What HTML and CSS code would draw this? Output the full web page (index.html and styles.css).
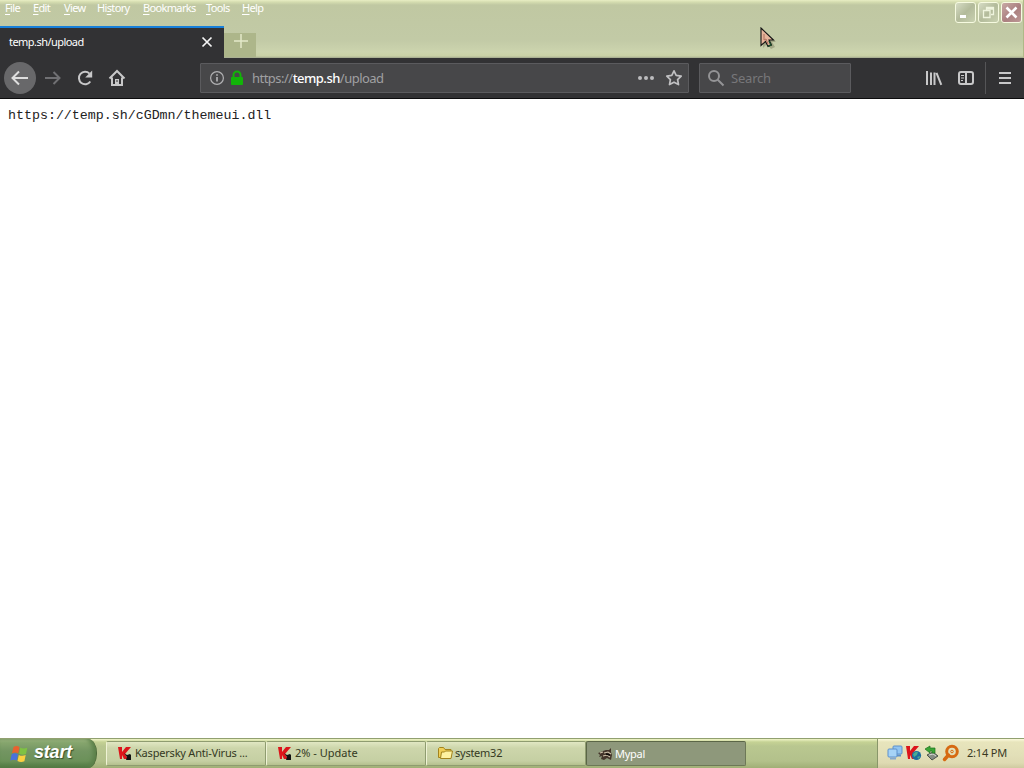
FILE: index.html
```html
<!DOCTYPE html>
<html lang="en">
<head>
  <meta charset="UTF-8">
  <title>temp.sh/upload</title>
  <link rel="stylesheet" href="styles.css">
</head>
<body>
  <div class="browser">
    <div class="titlebar">
      <div class="title-row">
        <div class="menu">
          <span><u>F</u>ile</span>
          <span><u>E</u>dit</span>
          <span><u>V</u>iew</span>
          <span>Hi<u>s</u>tory</span>
          <span><u>B</u>ookmarks</span>
          <span><u>T</u>ools</span>
          <span><u>H</u>elp</span>
        </div>
        <div class="window-buttons">
          <div class="win-btn"><svg width="19" height="19"><path d="M4 13.500h6" stroke="#fff" stroke-width="3"/></svg></div>
          <div class="win-btn"><svg width="19" height="19" fill="none" stroke="#eff4de" stroke-width="1.300"><path d="M7.500 7V4.500h7v7H12M7.500 6h7"/><path d="M4.500 7.500H11v7H4.500z"/></svg></div>
          <div class="win-btn close"><svg width="19" height="19"><path d="M4.500 4.500l10 10M14.500 4.500l-10 10" stroke="#fff" stroke-width="2.600"/></svg></div>
        </div>
      </div>
      <div class="tabs">
        <div class="tab">
          <span class="tab-title">temp.sh/upload</span>
          <svg width="12" height="12"><path d="M1.500 1.500l9 9M10.500 1.500l-9 9" stroke="#f5f5f5" stroke-width="1.700"/></svg>
        </div>
        <div class="new-tab"><svg width="16" height="16"><path d="M8 1v14M1 8h14" stroke="#e3e9c9" stroke-width="1.500"/></svg></div>
      </div>
    </div>

    <div class="nav">
      <div class="nav-buttons">
        <div class="back"><svg width="20" height="20" fill="none" stroke="#dedede" stroke-width="2"><path d="M18 10H3M9 3.500L2.500 10 9 16.500"/></svg></div>
        <svg width="18" height="18" fill="none" stroke="#707073" stroke-width="2"><path d="M1 9h14M9.500 3l6 6-6 6"/></svg>
        <svg width="18" height="18" fill="none" stroke="#c8c8c9" stroke-width="2"><path d="M14.300 12.500A6.200 6.200 0 1 1 13.500 4.600"/><path d="M16.200 1.500v7H9.200z" fill="#c8c8c9" stroke="none"/></svg>
        <svg width="18" height="18" fill="none" stroke="#c8c8c9" stroke-width="2"><path d="M1.500 9.500L9 2l7.500 7.500M4 8.500V16h10V8.500"/><path d="M7 15v-5h4v5z" fill="#c8c8c9" stroke="none"/><path d="M9 11v2" stroke="#323234" stroke-width="1"/></svg>
      </div>
      <div class="urlbar">
        <svg width="16" height="16" fill="none" stroke="#b1b1b3"><circle cx="8" cy="8" r="6.400" stroke-width="1.200"/><path d="M8 7v4.500M8 4.200v1.600" stroke-width="1.700"/></svg>
        <svg class="lock" width="14" height="16"><path d="M3.500 8V5a3.500 3.500 0 0 1 7 0v3" fill="none" stroke="#12b408" stroke-width="2"/><rect x="1" y="7" width="12" height="8" rx="1" fill="#12b408"/></svg>
        <span class="url">https://<b>temp.sh</b>/upload</span>
        <svg class="dots" width="18" height="16" fill="#bcbcbe"><circle cx="3" cy="8" r="2"/><circle cx="9" cy="8" r="2"/><circle cx="15" cy="8" r="2"/></svg>
        <svg width="18" height="18" fill="none" stroke="#c0c0c2" stroke-width="1.700" stroke-linejoin="round"><path d="M9 1.800l2.200 4.600 5 .7-3.600 3.500.9 5L9 13.200l-4.500 2.400.9-5L1.800 7.100l5-.7z"/></svg>
      </div>
      <div class="search">
        <svg width="18" height="18" fill="none" stroke="#949496" stroke-width="2"><circle cx="7" cy="7" r="5"/><path d="M10.500 10.500l6 6"/></svg>
        <span>Search</span>
      </div>
      <div class="tools">
        <svg width="18" height="16" stroke="#c8c8c9" stroke-width="2" fill="none"><path d="M2 1v14M6 2.500V15M9.500 2.500V15M11.500 2.800l4.800 12"/></svg>
        <svg width="18" height="16" stroke="#c8c8c9" stroke-width="2" fill="none"><rect x="2" y="2" width="14" height="12" rx="2"/><path d="M9 2v12"/><path d="M4 5.500h3M4 8h3M4 10.500h2" stroke-width="1"/></svg>
        <div class="hamburger"><svg width="14" height="14" stroke="#c8c8c9" stroke-width="2"><path d="M1 2h12M1 7h12M1 12h12"/></svg></div>
      </div>
    </div>

    <pre class="page">https://temp.sh/cGDmn/themeui.dll</pre>
  </div>

  <div class="taskbar">
    <div class="start">
      <svg width="20" height="20" viewBox="0 0 20 20">
        <path d="M4.500 3q3-2 6 0L9.300 9.300q-3-1.700-6.300 0z" fill="#e8622f"/>
        <path d="M11.300 3.600q3 1.800 7 .2L17 10q-3.400 1.500-6.900-.2z" fill="#7fc243"/>
        <path d="M2.700 10.300q3-1.900 6.300 0L7.800 16.600q-3-1.800-6.500 0z" fill="#4a72dc"/>
        <path d="M9.800 10.900q3 1.800 6.900.2l-1.300 6.200q-3.500 1.500-6.900-.2z" fill="#fbd040"/>
      </svg>
      <span>start</span>
    </div>
    <div class="tasks">
      <div class="task">
        <svg width="16" height="16"><path d="M1 2h4v5l4-5h5L8 9l3 5H7L5 10v4H3z" fill="#dc151b"/><path d="M7 8l3 2 3-1 1 1v5H9l1-3z" fill="#111"/></svg>
        <span class="kav">Kaspersky Anti-Virus ...</span>
      </div>
      <div class="task">
        <svg width="16" height="16"><path d="M1 2h4v5l4-5h5L8 9l3 5H7L5 10v4H3z" fill="#dc151b"/><path d="M7 8l3 2 3-1 1 1v5H9l1-3z" fill="#111"/></svg>
        <span class="update">2% - Update</span>
      </div>
      <div class="task">
        <svg width="17" height="16" stroke="#a3841d" stroke-linejoin="round"><path d="M1.500 12.500v-9l1-1h4l1.500 2h6v8z" fill="#f0cf58"/><path d="M3.500 13.500l1-6.500h3l1-1h7l-1.500 7.500z" fill="#fff3a0"/></svg>
        <span class="folder">system32</span>
      </div>
      <div class="task active">
        <svg width="17" height="16"><path d="M1 7l3-1 2-1 3-1 3 0 2-2 0 4 1 3-1 5-4-2-3 2-3-1 1-3-3 1 1-2z" fill="#44352a"/><path d="M3 7l3-1M7 7l4-1 3 2M6 10l4-1 3 2" stroke="#cfc2aa" stroke-width="1.100" fill="none"/><path d="M9 8l4 1" stroke="#0d0906" stroke-width="1.500"/></svg>
        <span class="mypal">Mypal</span>
      </div>
    </div>
    <div class="tray">
      <svg width="16" height="16" stroke="#5c90cb"><rect x="6" y="1" width="9" height="8" rx="1" fill="#91c5f1"/><path d="M10 10.500h4" stroke-width="2"/><rect x="1" y="4" width="9" height="8" rx="1" fill="#a6d3f6"/><path d="M3 13.500h6" stroke-width="2" stroke="#86a9cc"/></svg>
      <svg width="17" height="16"><path d="M1 1h4v5l4-5h5L8 8l3 6H7L5 10v4H3z" fill="#dc151b"/><circle cx="11.500" cy="10.500" r="4.600" fill="#1c6d9e"/><path d="M8 9q3-3 5-2l-1 3-3 2zM12 12l3-1-1 3z" fill="#49ad91"/></svg>
      <svg width="16" height="16"><path d="M3 10l6-3 5 4-6 4z" fill="#868c84" stroke="#4c544b"/><path d="M5 10l4-1 3 2" stroke="#d8dcd4" fill="none"/><path d="M1 4l5-3v2h5v5H8V6H6v2z" fill="#3ba635" stroke="#1c701d" stroke-width=".7"/></svg>
      <svg width="17" height="18" fill="none" stroke="#d66a12"><circle cx="10" cy="7.500" r="5.300" stroke-width="3"/><path d="M6.500 11l-4 4.500" stroke-width="3.500" stroke-linecap="round"/><circle cx="10" cy="7.500" r="1.300" stroke-width="1"/></svg>
      <span class="clock">2:14 PM</span>
    </div>
  </div>

  <svg class="cursor" width="20" height="25" viewBox="0 0 20 25">
    <path d="M3 3v18l4-4 4 5 4-2-3-5h4z" fill="#777b58" opacity=".45"/>
    <path d="M1 1v17.500l4.500-4 2.500 5 3.500-1.500-2.500-5h4.500z" fill="#e6b59b" stroke="#151515" stroke-width="1.100"/>
    <path d="M4 7v6l2-1 2 5" fill="none" stroke="#b0705f"/>
    <path d="M9 14l2 4-3 1" fill="none" stroke="#1f4c2d" stroke-width="1.500"/>
  </svg>
</body>
</html>
```

FILE: styles.css
```css
* {
  box-sizing: border-box;
}

body {
  margin: 0;
  width: 1024px;
  height: 768px;
  overflow: hidden;
  display: flex;
  flex-direction: column;
  background: #fff;
  font-family: "Noto Sans", sans-serif;
  font-size: 11px;
}

svg {
  display: block;
  flex: none;
}

span {
  white-space: nowrap;
}

.browser {
  flex: 1;
}

/* title bar */
.titlebar {
  height: 58px;
  background: linear-gradient(#e8eec4 0, #d5ddb0 2px, #c0c8a2 5px, #c2caa6 40px, #ccd4ae 52px, #c9d1a6 56px, #9fa58d 58px);
  border-right: 1px solid #aeb887;
}

.title-row {
  height: 26px;
  display: flex;
  justify-content: space-between;
}

.menu {
  display: grid;
  grid-template-columns: 28px 31px 33px 46px 63px 36px 30px;
  padding-left: 5px;
  line-height: 15px;
  color: #fff;
  letter-spacing: -0.65px;
}

.menu u {
  text-underline-offset: 2px;
}

.window-buttons {
  display: flex;
  gap: 2px;
  padding: 2px 1px 0 0;
}

.win-btn {
  width: 21px;
  height: 21px;
  border: 1px solid #f6fae0;
  border-radius: 3px;
  background: linear-gradient(135deg, #d6dcc4, #b3bb9b 50%, #c9d1b0);
}

.win-btn.close {
  background: linear-gradient(135deg, #c8aaa5, #ab8080 55%, #bd9896);
}

.tabs {
  display: flex;
  align-items: flex-end;
  height: 32px;
}

.tab {
  width: 224px;
  height: 32px;
  padding: 0 11px 2px 9px;
  border-top: 2px solid #1780d9;
  background: #323234;
  color: #fff;
  display: flex;
  align-items: center;
  justify-content: space-between;
}

.tab-title {
  margin-top: -2px;
  letter-spacing: -0.55px;
}

.new-tab {
  width: 32px;
  height: 24px;
  padding-left: 9px;
  margin-bottom: 1px;
  background: #adb68a;
}

/* navigation toolbar */
.nav {
  height: 41px;
  padding: 0 0 1px 4px;
  background: #323234;
  border-bottom: 1px solid #0c0c0d;
  display: flex;
  align-items: center;
}

.nav-buttons {
  width: 196px;
  display: flex;
  align-items: center;
  gap: 14px;
}

.nav-buttons .back {
  width: 32px;
  height: 32px;
  margin-right: -6px;
  border-radius: 50%;
  background: #68686a;
  display: flex;
  align-items: center;
  justify-content: center;
}

.urlbar,
.search {
  height: 30px;
  background: #474749;
  border: 1px solid #5b5b5e;
  border-radius: 1px;
  display: flex;
  align-items: center;
  color: #a0a0a2;
  font-size: 13px;
}

.urlbar {
  width: 489px;
  padding: 0 5px 0 8px;
}

.lock {
  margin-left: 5px;
}

.url {
  margin-left: 8px;
  letter-spacing: -0.52px;
}

.url b {
  color: #fff;
  font-weight: 500;
}

.dots {
  margin-left: auto;
  margin-right: 10px;
}

.search {
  width: 152px;
  margin-left: 10px;
  padding-left: 7px;
  gap: 6px;
  color: #77777a;
  letter-spacing: -0.2px;
}

.tools {
  flex: 1;
  display: flex;
  align-items: center;
  gap: 14px;
  padding-left: 74px;
}

.hamburger {
  height: 32px;
  margin-left: -4px;
  padding-left: 12px;
  border-left: 1px solid #555557;
  display: flex;
  align-items: center;
}

.page {
  margin: 0;
  padding: 9px 8px;
  font-family: "Liberation Mono", monospace;
  font-size: 13.3px;
  line-height: 15px;
  color: #222;
}

/* taskbar */
.taskbar {
  height: 30px;
  display: flex;
  border-top: 1px solid #91a070;
  background: linear-gradient(#f0f5c8 0, #c5d294 3px, #b9c790 7px, #b3c18b 22px, #a0af76 29px);
}

.start {
  width: 97px;
  padding-left: 9px;
  border-radius: 0 9px 9px 0 / 0 14px 14px 0;
  border-right: 1px solid #4c6b39;
  background: linear-gradient(#a9bf8b 0, #86a56e 4px, #739562 12px, #6b9159 22px, #4d7640 29px);
  box-shadow: inset -3px 0 4px #5b8049;
  display: flex;
  align-items: center;
  gap: 5px;
  color: #fff;
  font: italic bold 18px "Liberation Sans", sans-serif;
  text-shadow: 1px 1px 1px #37502b;
}

.start span {
  margin-top: -2px;
  letter-spacing: -0.2px;
}

.tasks {
  flex: 1;
  padding: 2px 0 0 9px;
  display: flex;
}

.task {
  width: 160px;
  height: 25px;
  padding: 0 0 1px 10px;
  border: 1px solid #8f9c70;
  border-left-color: #eff3d5;
  border-radius: 2px;
  background: linear-gradient(#e1e7c3, #cdd6ab 6px, #c5cfa3 19px, #b5c08e);
  display: flex;
  align-items: center;
  gap: 2px;
  color: #34391f;
}

.task span {
  margin-top: -2px;
}

.kav {
  letter-spacing: -0.2px;
}

.folder,
.mypal {
  margin-left: -1px;
  letter-spacing: -0.25px;
}

.task.active {
  border-color: #5b6647 #6d7857 #6d7857 #5b6647;
  background: #8e987b;
  color: #fff;
  padding: 1px 0 0 10px;
}

.tray {
  width: 147px;
  padding: 0 0 1px 9px;
  border-left: 1px solid #89966a;
  background: linear-gradient(#fbf9dc 0, #e8e5bc 3px, #e2dfb8 16px, #dedab2 24px, #cfcaa0 29px);
  display: flex;
  align-items: center;
  gap: 2px;
}

.clock {
  margin: -2px 0 0 6px;
  color: #39381f;
  letter-spacing: -0.2px;
}

/* mouse pointer, over the title bar */
.cursor {
  position: absolute;
  left: 760px;
  top: 27px;
}
```
